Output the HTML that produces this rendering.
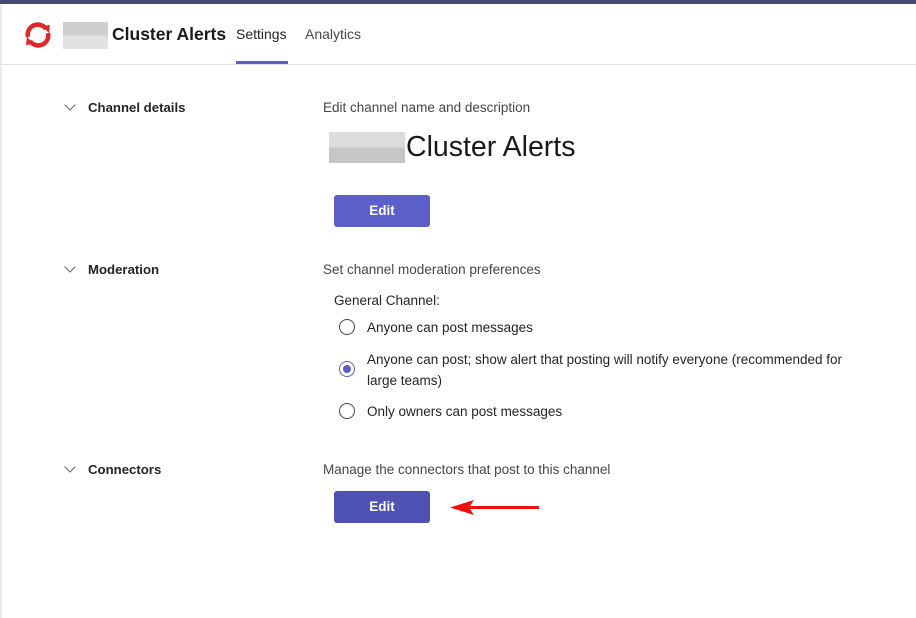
<!DOCTYPE html>
<html><head><meta charset="utf-8"><style>
*{margin:0;padding:0;box-sizing:border-box}
body{width:916px;height:618px;overflow:hidden;background:#fff;font-family:"Liberation Sans",sans-serif;color:#252423;position:relative}
.a{position:absolute}
.topbar{left:0;top:0;width:916px;height:4px;background:#464775}
.lb{left:0;top:4px;width:2px;height:614px;background:#ebebeb}
.hb{left:0;top:64px;width:916px;height:1px;background:#e1dfdd}
.sec{font-size:13.2px;font-weight:bold;color:#252423}
.chev{width:8px;height:8px;border-right:1.3px solid #605e5c;border-bottom:1.3px solid #605e5c;transform:rotate(45deg)}
.desc{font-size:13.5px;color:#484644}
.btn{width:96px;height:32px;border-radius:3px;color:#fff;font-size:13.5px;font-weight:bold;text-align:center;line-height:32px}
.radio{width:16px;height:16px;border:1.3px solid #484644;border-radius:50%}
.opt{font-size:13.5px;color:#252423}
</style></head><body>
<div class="a topbar"></div>
<div class="a lb"></div>
<div class="a hb"></div>
<svg class="a" style="left:22px;top:20px" width="32" height="30" viewBox="0 0 32 30">
<path d="M6 17 A10 10 0 0 1 24 9" fill="none" stroke="#e0262b" stroke-width="4.5"/>
<path d="M26 13 A10 10 0 0 1 8 21" fill="none" stroke="#e0262b" stroke-width="4.5"/>
<path d="M20 6 L28 5 L27 13 Z" fill="#e0262b"/>
<path d="M12 24 L4 25 L5 17 Z" fill="#e0262b"/>
</svg>
<div class="a" style="left:63px;top:22px;width:45px;height:27px;background:linear-gradient(#cfcfcf 50%,#e2e2e2 50%)"></div>
<div class="a" style="left:112px;top:24px;font-size:17.5px;font-weight:bold;color:#1b1a19">Cluster Alerts</div>
<div class="a" style="left:236px;top:26px;font-size:14px;color:#252423">Settings</div>
<div class="a" style="left:236px;top:61px;width:52px;height:3px;background:#5b5fc7"></div>
<div class="a" style="left:305px;top:26px;font-size:14px;color:#484644">Analytics</div>

<div class="a chev" style="left:66px;top:101px"></div>
<div class="a sec" style="left:88px;top:100px">Channel details</div>
<div class="a desc" style="left:323px;top:100px">Edit channel name and description</div>
<div class="a" style="left:329px;top:132px;width:76px;height:31px;background:linear-gradient(#dcdcdc 50%,#c8c6c4 50%)"></div>
<div class="a" style="left:406px;top:131px;font-size:28.5px;color:#1b1a19">Cluster Alerts</div>
<div class="a btn" style="left:334px;top:195px;background:#5b5fc7">Edit</div>

<div class="a chev" style="left:66px;top:263px"></div>
<div class="a sec" style="left:88px;top:262px">Moderation</div>
<div class="a desc" style="left:323px;top:262px">Set channel moderation preferences</div>
<div class="a opt" style="left:334px;top:293px">General Channel:</div>
<div class="a radio" style="left:339px;top:319px"></div>
<div class="a opt" style="left:367px;top:320px">Anyone can post messages</div>
<div class="a radio" style="left:339px;top:361px;border-color:#5b5fc7"><div style="margin:2.5px;width:8.5px;height:8.5px;border-radius:50%;background:#5b5fc7"></div></div>
<div class="a opt" style="left:367px;top:349px;width:500px;line-height:21px">Anyone can post; show alert that posting will notify everyone (recommended for large teams)</div>
<div class="a radio" style="left:339px;top:403px"></div>
<div class="a opt" style="left:367px;top:404px">Only owners can post messages</div>

<div class="a chev" style="left:66px;top:463px"></div>
<div class="a sec" style="left:88px;top:462px">Connectors</div>
<div class="a desc" style="left:323px;top:462px">Manage the connectors that post to this channel</div>
<div class="a btn" style="left:334px;top:491px;background:#4f52b2">Edit</div>
<svg class="a" style="left:448px;top:498px" width="94" height="20" viewBox="0 0 94 20">
<path d="M16 9.5 H91" stroke="#f20d0d" stroke-width="3"/>
<path d="M2 9.5 L26 2 L21 9.5 L26 17 Z" fill="#f20d0d"/>
</svg>
</body></html>
